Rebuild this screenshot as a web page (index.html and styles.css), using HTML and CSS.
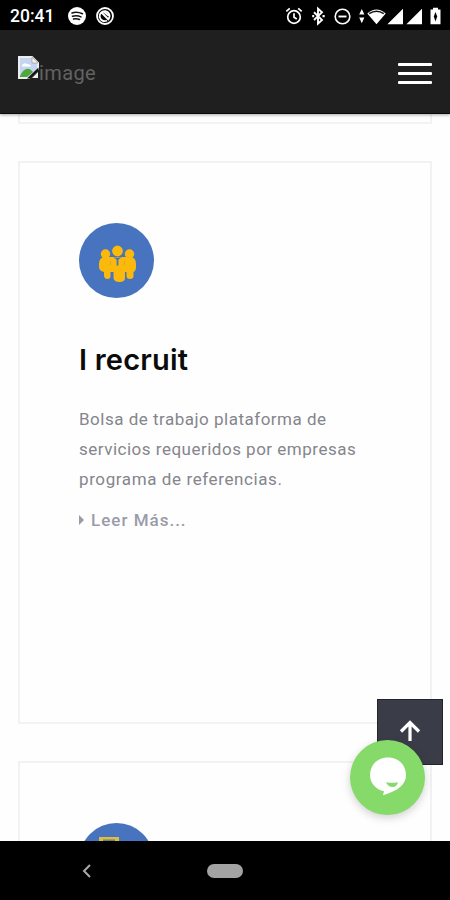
FILE: index.html
```html
<!DOCTYPE html>
<html lang="es">
<head>
  <meta charset="UTF-8" />
  <meta name="viewport" content="width=device-width, initial-scale=1.0" />
  <title>I recruit</title>
  <link rel="stylesheet" href="styles.css">
</head>
<body>
  <div class="status-bar">
    <span class="clock">20:41</span>
    <svg class="spotify" width="20" height="20" viewBox="0 0 20 20">
      <circle cx="10" cy="10" r="9" fill="#fff"/>
      <path d="M5 7q5-1.600 10.500.8M5.500 10.200q4.500-1.300 8.500.7M6.500 13q3.300-.8 6 .5" fill="none" stroke="#111" stroke-width="1.500" stroke-linecap="round"/>
    </svg>
    <svg class="whats" width="20" height="20" viewBox="0 0 20 20" fill="none" stroke="#fff">
      <circle cx="10" cy="10" r="8" stroke-width="1.800"/>
      <path d="M14 12.500a5 5 0 1 0-2 2M7 7l7 7M8.500 5.500l5 4" stroke-width="1.900"/>
    </svg>
    <div class="status-icons">
      <svg width="160" height="22" viewBox="0 0 160 22" fill="none" stroke="#fff">
        <!-- alarm -->
        <circle cx="9" cy="12" r="6.300" stroke-width="1.700"/>
        <path d="M1.300 6.300l3.500-3M16.700 6.300l-3.500-3M9 8.300v4l2.800 1.700" stroke-width="1.700"/>
        <!-- bluetooth -->
        <path d="M29 7.200l8 7.800-4 3.600V3.700l4 3.500-8 7.800" stroke-width="1.900"/>
        <path d="M27.200 11.200h2M37.500 11.200h2.200" stroke-width="2.200"/>
        <!-- do not disturb -->
        <circle cx="57.500" cy="11.500" r="7.300" stroke-width="1.600"/>
        <path d="M53.500 11.500h8" stroke-width="1.900"/>
        <!-- wifi -->
        <g fill="#fff" stroke="none">
          <path d="M74.200 9.500l2.600-5.500 2.600 5.500zM74.200 12.500l2.600 5.800 2.600-5.800z"/>
          <path d="M82.300 8.500q9.200-8 18.400 0l-9.200 10.700z"/>
          <!-- signal -->
          <path d="M118 3.700v15.600h-15.600zM137 3.700v15.600h-15.600z"/>
          <!-- battery -->
          <path d="M145.500 4.500h2.500V2.800h5v1.700h2.500v14.800h-10z"/>
        </g>
        <path d="M84.200 8.700q7.300-5 14.600 0" stroke="#111" stroke-width="1.400"/>
        <path d="M150.500 7l1.700 4.500-1.700 5-1.700-5z" fill="#000" stroke="none"/>
      </svg>
    </div>
  </div>

  <header>
    <a class="logo" href="#">
      <svg width="21" height="23" viewBox="0 0 21 23">
        <path d="M1 1h13l6 6v6L11 22H1z" fill="#c5d4ef" stroke="#eceef2" stroke-width="2"/>
        <path d="M2 20q5-10 11-6l2 2-6 5H2z" fill="#4fa83d"/>
        <path d="M4 10a3 3 0 0 1 5-2q4 0 4 2.500H4z" fill="#fff"/>
        <path d="M14 1v6h6z" fill="#f4f4f4" stroke="#9a9a9a" stroke-width=".7"/>
        <path d="M20.500 11.500v3L12 22.500H9z" fill="#111"/>
        <path d="M20 16v6h-6z" fill="#eee"/>
      </svg><span>image</span>
    </a>
    <button class="menu" aria-label="Menú"><i></i><i></i><i></i></button>
  </header>

  <main>
    <section class="card card-prev"></section>

    <section class="card">
      <div class="card-icon">
        <svg width="75" height="75" viewBox="0 0 75 75">
          <g fill="#fbb90c">
            <circle cx="26.500" cy="31" r="4.700"/>
            <circle cx="50.500" cy="31" r="4.700"/>
            <path d="M20 41q0-7 6-7h25q6 0 6 7v3q0 4-2.500 5v4q0 3-3.500 3t-3.500-3v-4h-1.500v6q0 4-5.500 4t-6-4v-6h-3v4q0 3-3 3t-3.500-3v-4q-5-1-5-5z"/>
            <circle cx="38.500" cy="28" r="6" stroke="#4773bf" stroke-width="1.200"/>
          </g>
          <path d="M34 33.800q4.500 2.400 9 0l-3.600 3v5.700h-1.800v-5.700z" fill="#4773bf"/>
          <path d="M31.500 38v4M45.500 38v4" stroke="#d9a828" stroke-width="1"/>
        </svg>
      </div>
      <h2>I recruit</h2>
      <p>
        <span class="line-1">Bolsa de trabajo plataforma de</span><br/>
        <span class="line-2">servicios requeridos por empresas</span><br/>
        <span class="line-3">programa de referencias.</span>
      </p>
      <a class="more" href="#"><i></i><span>Leer Más...</span></a>
    </section>

    <section class="card">
      <div class="card-icon">
        <svg width="75" height="75" viewBox="0 0 75 75">
          <path d="M20 14h20v20H20z" fill="#d9bd45"/>
          <path d="M24 16.500h12v14H24z" fill="#718070"/>
        </svg>
      </div>
    </section>

    <a class="to-top" href="#" aria-label="Subir">
      <svg width="22" height="24" viewBox="0 0 22 24" fill="none" stroke="#fff" stroke-width="3.200">
        <path d="M11 22V4M2 12.500l9-9 9 9"/>
      </svg>
    </a>
    <button class="chat" aria-label="Chat">
      <svg width="75" height="75" viewBox="0 0 75 75">
        <path d="M38 17.500c10.500 0 18 7.500 18 17.500 0 9.500-8 16-23 20.200l1-4c-8-1.500-14-8-14-16.200 0-10 7.500-17.500 18-17.500z" fill="#fff"/>
        <path d="M36 42.200q6 1.200 12 0-1 4.800-5.500 4.800T36 42.200z" fill="#85da69"/>
      </svg>
    </button>
  </main>

  <div class="nav-bar">
    <svg class="back" width="10" height="14" viewBox="0 0 10 14">
      <path d="M8 1L2 7l6 6" fill="none" stroke="#aaa" stroke-width="2"/>
    </svg>
    <span class="home"></span>
  </div>
</body>
</html>
```

FILE: styles.css
```css
* {
  box-sizing: border-box;
}
body {
  margin: 0;
  width: 450px;
  height: 900px;
  overflow: hidden;
  display: flex;
  flex-direction: column;
  font-family: Roboto, sans-serif;
  background-color: #fefefe;
}
a {
  text-decoration: none;
}
button {
  border: 0;
  padding: 0;
}
svg {
  display: block;
}
.status-bar {
  height: 30px;
  flex: none;
  display: flex;
  align-items: center;
  padding: 1px 7px 0 10px;
  background: #000;
}
.clock {
  width: 57px;
  color: #fff;
  font-size: 17.5px;
  font-weight: 500;
  line-height: 20px;
}
.whats {
  margin-left: 8px;
}
.status-icons {
  margin-left: auto;
  margin-right: -2px;
}
header {
  height: 84px;
  flex: none;
  display: flex;
  justify-content: space-between;
  align-items: center;
  padding: 0 18px;
  background: #1f1f1f;
  border-bottom: 1px solid #0b0b0b;
  box-shadow: 0 1px 3px rgba(0, 0, 0, 0.35);
  z-index: 1;
}
.logo {
  display: flex;
  align-items: flex-start;
  padding-bottom: 3px;
  color: #626262;
  font-size: 20px;
  line-height: 23px;
  letter-spacing: 0.4px;
}
.logo span {
  padding-top: 6px;
}
.menu {
  width: 34px;
  display: flex;
  flex-direction: column;
  gap: 6px;
  padding-top: 4px;
  background: none;
}
.menu i {
  height: 3px;
  background: #fff;
  border-radius: 1px;
}
main {
  flex: 1;
  min-height: 0;
  overflow: hidden;
  position: relative;
  padding: 0 18px;
}
.card {
  height: 563px;
  margin-bottom: 37px;
  padding: 60px 59px 0;
  border: 2px solid #f2f2f2;
  background: #fefefe;
}
.card-prev {
  height: 10px;
  padding: 0;
  border-top: 0;
}
.card-icon {
  width: 75px;
  height: 75px;
  border-radius: 50%;
  overflow: hidden;
  background: #4773bf;
}
.card h2 {
  margin: 41px 0 0;
  color: #0b0b0b;
  font-family: Inter, sans-serif;
  font-size: 29px;
  font-weight: 600;
  line-height: 42px;
  letter-spacing: 0.2px;
}
.card p {
  margin: 23px 0 0;
  color: #85858c;
  font-size: 17px;
  line-height: 30px;
  white-space: nowrap;
}
.line-1 {
  letter-spacing: 0.5px;
}
.line-2 {
  letter-spacing: 0.5px;
}
.line-3 {
  letter-spacing: 0.6px;
}
.more {
  display: flex;
  align-items: center;
  gap: 7px;
  margin-top: 11px;
  color: #9a9ba8;
  font-size: 17px;
  font-weight: 500;
  line-height: 30px;
  letter-spacing: 1px;
}
.more i {
  border-left: 5px solid #9a9ba8;
  border-top: 5px solid transparent;
  border-bottom: 5px solid transparent;
}
/* floating buttons */
.to-top {
  position: absolute;
  right: 7px;
  bottom: 76px;
  width: 66px;
  height: 66px;
  display: flex;
  align-items: center;
  justify-content: center;
  padding-bottom: 3px;
  background: #3a3d48;
  border: 1px solid #22242c;
}
.chat {
  position: absolute;
  right: 25px;
  bottom: 26px;
  width: 75px;
  height: 75px;
  border-radius: 50%;
  background: #85da69;
  box-shadow: 0 3px 8px rgba(0, 0, 0, 0.18);
}
.nav-bar {
  height: 59px;
  flex: none;
  display: flex;
  align-items: center;
  padding-left: 82px;
  background: #000;
}
.home {
  width: 36px;
  height: 14px;
  margin-left: 115px;
  border-radius: 7px;
  background: #a3a3a3;
}
```
